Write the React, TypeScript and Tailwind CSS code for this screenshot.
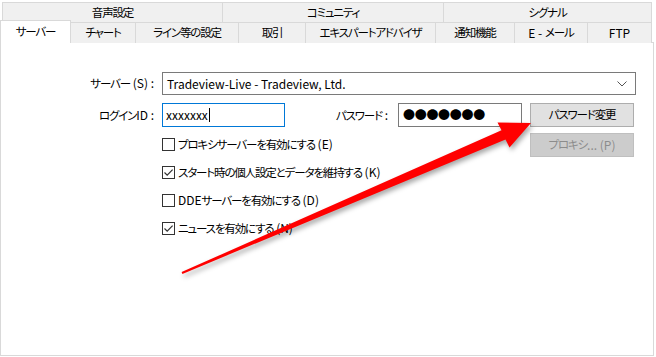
import React from "react";

function T({ text }: { text: string }) {
  const parts = text.split(/([\u3000-\u30ff\u4e00-\u9fff\uff00-\uffef]+)/);
  return (
    <>
      {parts.map((p, i) =>
        /[\u3000-\u30ff\u4e00-\u9fff\uff00-\uffef]/.test(p) ? (
          <span key={i} className="text-[11.5px] tracking-[-1.15px]">
            {p}
          </span>
        ) : (
          <span key={i}>{p}</span>
        )
      )}
    </>
  );
}

function Check({ checked, label }: { checked: boolean; label: string }) {
  return (
    <div className="flex items-center h-[13px]">
      <div className="w-[13px] h-[13px] border border-[#333333] bg-white flex items-center justify-center shrink-0">
        {checked && (
          <svg width="11" height="11" viewBox="0 0 11 11">
            <path d="M1.5 5.5 L4.2 8.2 L9.6 2.6" fill="none" stroke="#333333" strokeWidth="1.2" />
          </svg>
        )}
      </div>
      <span className="ml-[3px] whitespace-nowrap">
        <T text={label} />
      </span>
    </div>
  );
}

export default function App() {
  const tabTop = "flex items-center justify-center border-l border-t border-[#d9d9d9] bg-[#f0f0f0] h-[21px]";
  const tabBot = "flex items-center justify-center border-t border-r border-[#d9d9d9] bg-[#f0f0f0] h-[21px]";
  return (
    <div className="relative w-[656px] h-[357px] bg-white text-[12px] text-black font-['Noto_Sans_CJK_JP',sans-serif] [font-feature-settings:'palt'] overflow-hidden">
      {/* row 1 tabs */}
      <div className="flex h-[21px] mt-[2px] ml-[2px]">
        <div className={`${tabTop} w-[220px]`}><T text="音声設定" /></div>
        <div className={`${tabTop} w-[221px]`}><T text="コミュニティ" /></div>
        <div className={`${tabTop} w-[209px] border-r`}><T text="シグナル" /></div>
      </div>
      {/* row 2 tabs */}
      <div className="flex items-end h-[23px] mt-[-3px]">
        <div className="relative z-10 flex items-center justify-center w-[71px] h-[23px] pb-[1px] bg-white border-l border-t border-r border-[#d9d9d9]">
          <T text="サーバー" />
        </div>
        <div className={`${tabBot} w-[65px]`}><T text="チャート" /></div>
        <div className={`${tabBot} w-[103px]`}><T text="ライン等の設定" /></div>
        <div className={`${tabBot} w-[67px]`}><T text="取引" /></div>
        <div className={`${tabBot} w-[130px]`}><T text="エキスパートアドバイザ" /></div>
        <div className={`${tabBot} w-[79px]`}><T text="通知機能" /></div>
        <div className={`${tabBot} w-[73px]`}><span className="whitespace-pre">E - </span><T text="メール" /></div>
        <div className={`${tabBot} w-[64px]`}>FTP</div>
      </div>
      {/* panel */}
      <div className="mt-[-1px] w-[654px] h-[314px] border border-[#d9d9d9] bg-white">
        <div className="flex flex-col pt-[29px]">
          <div className="flex items-center h-[23px]">
            <div className="w-[153px] text-right whitespace-nowrap"><T text="サーバー (S) :" /></div>
            <div className="ml-[8px] w-[474px] h-[23px] border border-[#7a7a7a] flex items-center pl-[4px] pr-[8px]">
              <span className="whitespace-nowrap">Tradeview-Live - Tradeview, Ltd.</span>
              <svg className="ml-auto" width="10" height="6" viewBox="0 0 10 6">
                <path d="M0.5 0.5 L5 5 L9.5 0.5" fill="none" stroke="#555555" strokeWidth="1" />
              </svg>
            </div>
          </div>
          <div className="flex mt-[8px]">
            <div className="flex flex-col">
              <div className="flex items-center h-[24px]">
                <div className="w-[153px] text-right whitespace-nowrap"><T text="ログインID :" /></div>
                <div className="ml-[8px] w-[123px] h-[24px] border border-[#0078d7] flex items-center pl-[3px]">
                  <span>xxxxxxx</span>
                  <span className="ml-[1px] w-[1px] h-[14px] bg-black" />
                </div>
                <div className="w-[113px] text-right pr-[10px] whitespace-nowrap"><T text="パスワード :" /></div>
                <div className="w-[124px] h-[24px] border border-[#7a7a7a] flex items-center pl-[4px]">
                  <span className="text-[12px] [font-feature-settings:normal] tracking-[-0.3px] leading-none">●●●●●●●</span>
                </div>
              </div>
              <div className="flex flex-col ml-[161px] mt-[11px] gap-[15px]">
                <Check checked={false} label="プロキシサーバーを有効にする (E)" />
                <Check checked={true} label="スタート時の個人設定とデータを維持する (K)" />
                <Check checked={false} label="DDEサーバーを有効にする (D)" />
                <Check checked={true} label="ニュースを有効にする (N)" />
              </div>
            </div>
            <div className="ml-[8px] flex flex-col gap-[6px]">
              <div className="w-[104px] h-[24px] bg-[#e1e1e1] border border-[#adadad] flex items-center justify-center whitespace-nowrap">
                <T text="パスワード変更" />
              </div>
              <div className="w-[104px] h-[24px] bg-[#cccccc] border border-[#bfbfbf] text-[#8c8c8c] flex items-center justify-center whitespace-nowrap">
                <T text="プロキシ... (P)" />
              </div>
            </div>
          </div>
        </div>
      </div>
      {/* red arrow overlay */}
      <svg
        className="absolute left-0 top-0 pointer-events-none"
        width="656"
        height="357"
        viewBox="0 0 656 357"
        style={{ filter: "drop-shadow(2px 3px 2.5px rgba(0,0,0,0.35))" }}
      >
        <polygon
          points="182.4,273.9 505.5,139.4 509.5,147.5 531,123 497.5,122.5 501.5,130.2 181.6,272.1"
          fill="#ff0000"
        />
      </svg>
    </div>
  );
}
